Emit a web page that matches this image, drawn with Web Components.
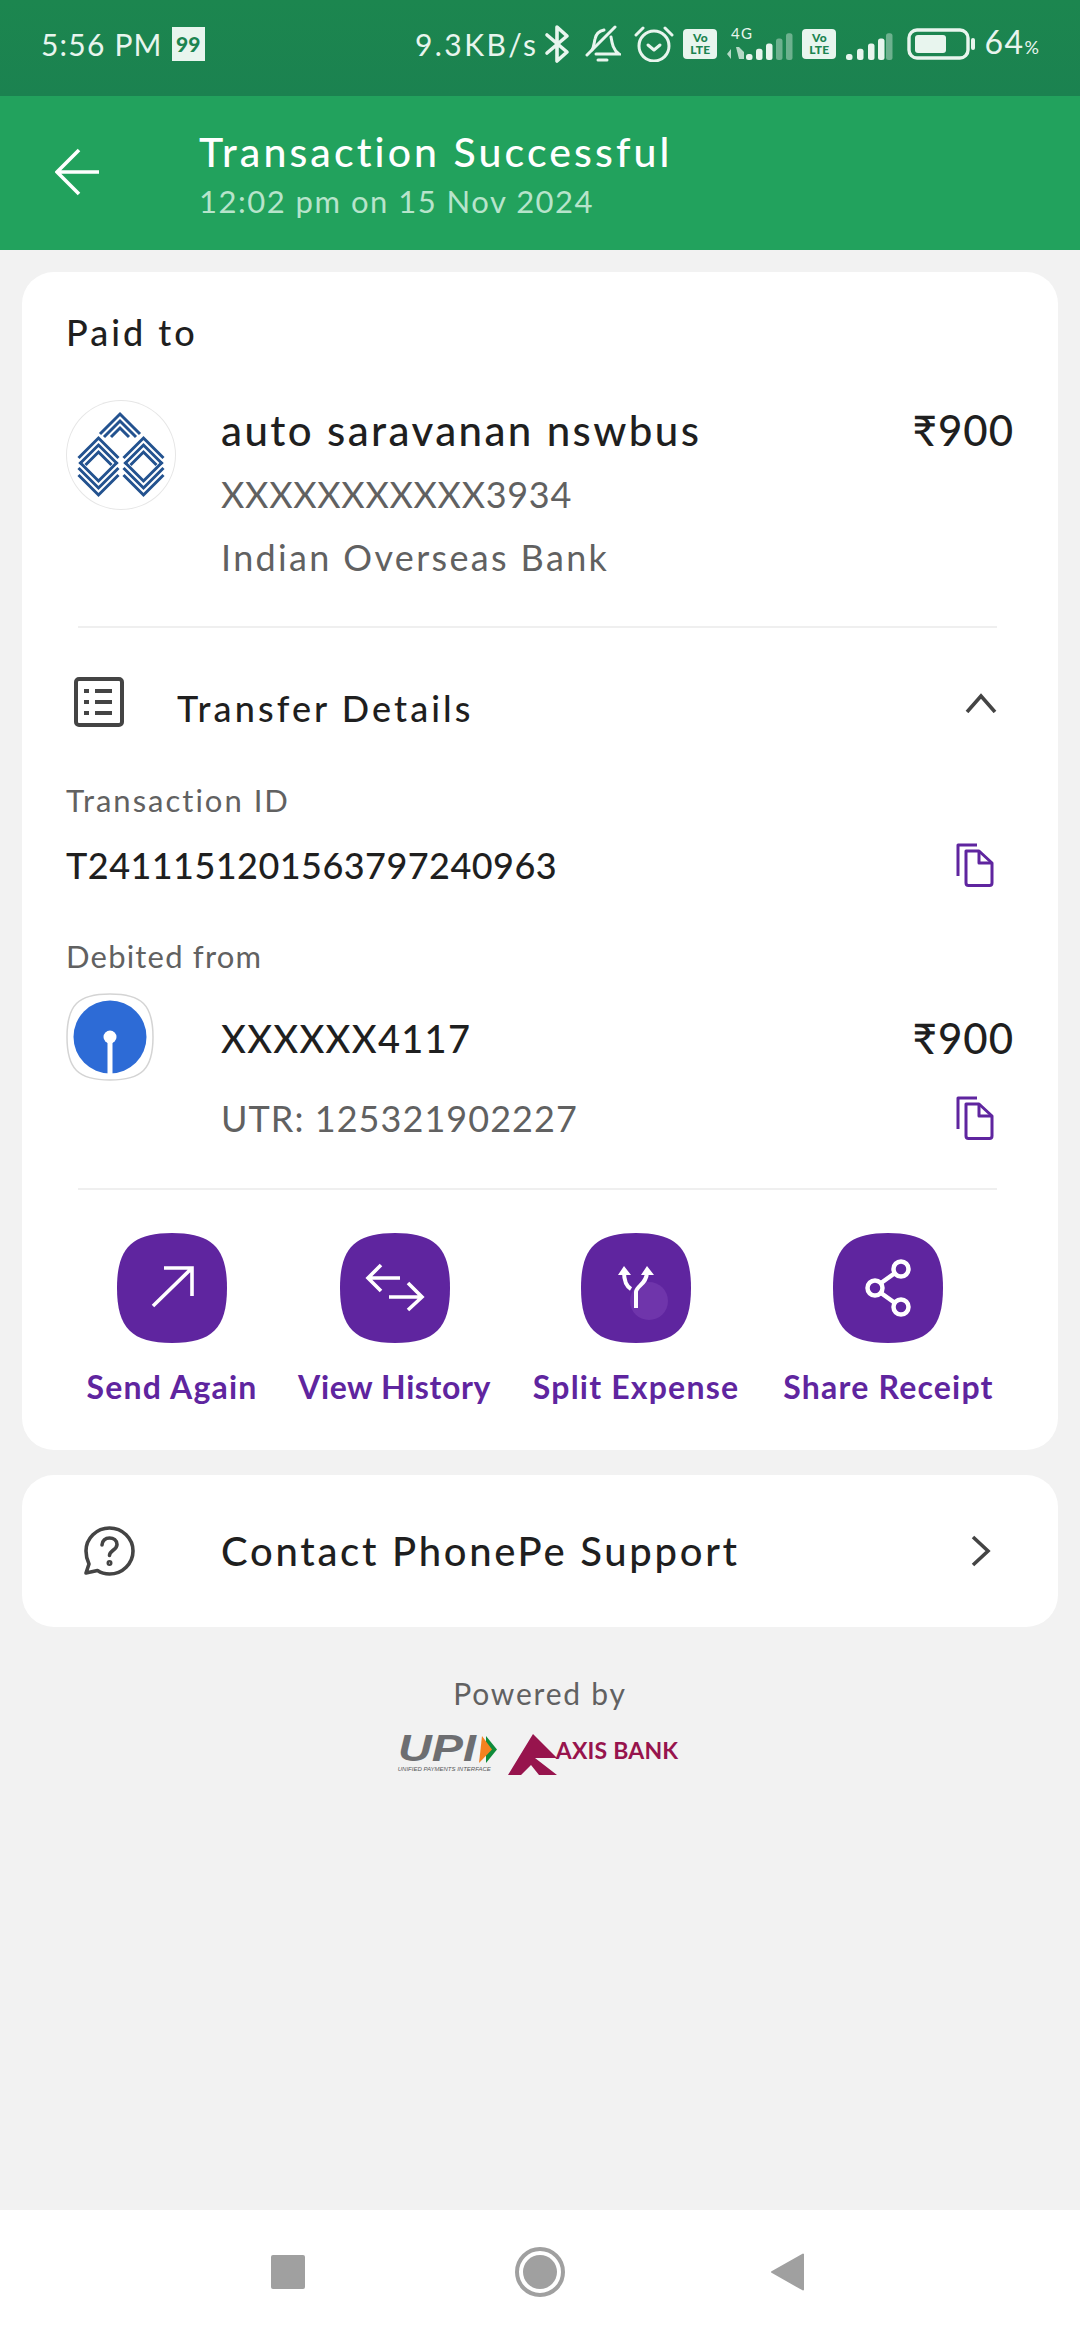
<!DOCTYPE html>
<html>
<head>
<meta charset="utf-8">
<title>Transaction Successful</title>
<style>
  html, body { margin: 0; padding: 0; background: #f2f2f2; }
  body { font-family: "Lato", "Noto Sans", sans-serif; color: #1f1f1f; }
  #app { display: flex; flex-direction: column; height: 2340px; overflow: hidden; }
  main { flex: 1; padding: 22px 22px 0; display: flex; flex-direction: column; gap: 25px; }
</style>
</head>
<body>
<div id="app">
  <status-bar></status-bar>
  <app-header heading="Transaction Successful" sub="12:02 pm on 15 Nov 2024"></app-header>
  <main>
    <payment-card></payment-card>
    <support-row label="Contact PhonePe Support"></support-row>
    <powered-by></powered-by>
  </main>
  <nav-bar></nav-bar>
</div>

<script>
class StatusBar extends HTMLElement {
  constructor() {
    super();
    this.attachShadow({ mode: 'open' });
  }

  connectedCallback() {
    const volte = `<span class="volte"><b>Vo</b><b>LTE</b></span>`;
    const bars = (xs, dim) => xs.map((x, i) => {
      const h = 6 + i * 5.2;
      const fade = i >= dim ? ' opacity=".4"' : '';
      return `<rect x="${x}" y="${34 - h}" width="6.500" height="${h}" rx="2.5" fill="#e8f5ee"${fade}/>`;
    }).join('');

    this.shadowRoot.innerHTML = `
      <style>
        :host {
          display: flex;
          align-items: center;
          height: 88px;
          padding: 0 41px 8px 41px;
          background: linear-gradient(#1c864f, #1b8250);
          color: #e8f5ee;
          font-size: 30px;
          line-height: 40px;
          letter-spacing: 1.2px;
          white-space: nowrap;
        }
        span { flex-shrink: 0; }
        .badge {
          width: 33px;
          height: 34px;
          margin-left: 9px;
          background: #e8f5ee;
          color: #1c8450;
          font-size: 21px;
          font-weight: 900;
          letter-spacing: 0;
          text-align: center;
          line-height: 34px;
        }
        .speed { margin-left: auto; margin-right: 6px; letter-spacing: 2.4px; }
        svg { display: block; flex-shrink: 0; }
        .volte {
          display: flex;
          flex-direction: column;
          align-items: center;
          justify-content: center;
          width: 34px;
          height: 30px;
          margin-left: 9px;
          background: #e8f5ee;
          border-radius: 4px;
          color: #1c8450;
          font-size: 12px;
          line-height: 12px;
          letter-spacing: .3px;
        }
        .volte b { font-weight: 900; }
        .pct { font-size: 32px; margin-left: 9px; letter-spacing: 1.5px; }
        .pct small { font-size: 18px; letter-spacing: 0; }
      </style>
      <span>5:56 PM</span>
      <span class="badge">99</span>
      <span class="speed">9.3KB/s</span>
      <svg width="26" height="40" viewBox="0 0 26 40" fill="none" stroke="#e8f5ee" stroke-width="3.6" stroke-linejoin="round" stroke-linecap="round">
        <path d="M3 11 23 28 13 37V3L23 12 3 29"/>
      </svg>
      <svg style="margin-left:14px" width="37" height="38" viewBox="0 0 37 38" fill="none" stroke="#e8f5ee" stroke-width="3" stroke-linecap="round">
        <path d="M3 30 31 2"/>
        <path d="M8 25c2-3 2-7 3-11 1-5 4-8 9-9"/>
        <path d="M27 12c1 6 2 13 8 17H12"/>
        <path d="M14 35h9"/>
      </svg>
      <svg style="margin-left:13px" width="40" height="36" viewBox="0 0 40 36" fill="none" stroke="#e8f5ee" stroke-width="3" stroke-linecap="round" stroke-linejoin="round">
        <circle cx="20" cy="20" r="15"/>
        <path d="M14 19l6 5 6-5"/>
        <path d="M2 9 9 2M38 9 31 2"/>
      </svg>
      ${volte}
      <svg style="margin-left:9px" width="67" height="36" viewBox="0 0 67 36">
        <text x="5" y="13" font-size="15" font-family="Lato, sans-serif" fill="#e8f5ee">4G</text>
        <path d="M5 23v10l-4-5zM10 21h3l5 5v7h-5z" fill="#e8f5ee" opacity=".75"/>
        ${bars([20, 30, 40, 50, 60], 3)}
      </svg>
      ${volte}
      <svg style="margin-left:9px" width="48" height="36" viewBox="0 0 48 36">${bars([1, 12, 23, 33, 41], 4)}</svg>
      <svg style="margin-left:14px" width="68" height="32" viewBox="0 0 68 32" fill="none">
        <rect x="2" y="2" width="59" height="28" rx="8" stroke="#e8f5ee" stroke-width="3.4"/>
        <rect x="8" y="7" width="31" height="18" rx="3" fill="#e8f5ee"/>
        <rect x="64" y="10" width="4" height="12" rx="2" fill="#e8f5ee"/>
      </svg>
      <span class="pct">64<small>%</small></span>
    `;
  }
}

class AppHeader extends HTMLElement {
  constructor() {
    super();
    this.attachShadow({ mode: 'open' });
  }

  connectedCallback() {
    this.shadowRoot.innerHTML = `
      <style>
        :host {
          display: flex;
          align-items: center;
          height: 154px;
          padding-left: 55px;
          background: #22a25d;
          color: #fff;
        }
        svg { flex-shrink: 0; margin: -2px 100px 0 0; }
        div { padding-top: 2px; }
        h1 {
          margin: 0;
          font-size: 41px;
          font-weight: 500;
          line-height: 50px;
          letter-spacing: 3.1px;
        }
        p {
          margin: 4px 0 0;
          color: #b7e4cb;
          font-size: 31px;
          line-height: 40px;
          letter-spacing: 1.5px;
        }
      </style>
      <svg width="44" height="48" viewBox="0 0 44 48" fill="none" stroke="#fff" stroke-width="3.6">
        <path d="M44 24H2M24 2 2 24l22 22"/>
      </svg>
      <div>
        <h1>${this.getAttribute('heading')}</h1>
        <p>${this.getAttribute('sub')}</p>
      </div>
    `;
  }
}

class CopyIcon extends HTMLElement {
  constructor() {
    super();
    this.attachShadow({ mode: 'open' });
    this.shadowRoot.innerHTML = `
      <style>:host { display: block; width: 38px; height: 44px; } svg { display: block; }</style>
      <svg width="38" height="44" viewBox="0 0 38 44" fill="none" stroke="#5f259f" stroke-width="3" stroke-linejoin="round">
        <path d="M2 33V2h19"/>
        <path d="M10 8h13l13 12v20a2.500 2.500 0 0 1-2.500 2.500h-21A2.500 2.500 0 0 1 10 40z"/>
        <path d="M23 8v12h13"/>
      </svg>
    `;
  }
}

const ACTION_ICONS = {
  send: '<path d="M36 73 75 35M47 35h28v28"/>',
  history: '<path d="M60 45H29M41 32 28 45l13 13M49 64h32M68 50l14 14-14 13"/>',
  split: `<circle cx="68" cy="68" r="19" fill="#6f35ab" stroke="none"/>
    <path stroke-width="4" d="M55 75V59c0-6 11-8 11-20M50 56c-5-3-7-8-7-17"/>
    <path fill="#fff" stroke="none" d="M66 33l7 9H60zM43 33l7 9H37z"/>`,
  share: `<g stroke-width="4.500"><circle cx="68" cy="36" r="7.500"/><circle cx="42" cy="55" r="7.500"/><circle cx="68" cy="74" r="7.500"/>
    <path d="M48 50 62 40M48 60l14 10"/></g>`
};

class ActionButton extends HTMLElement {
  constructor() {
    super();
    this.attachShadow({ mode: 'open' });
  }

  connectedCallback() {
    this.shadowRoot.innerHTML = `
      <style>
        :host {
          display: flex;
          flex-direction: column;
          align-items: center;
          color: #5f259f;
          font-size: 32px;
          font-weight: 700;
          line-height: 40px;
          letter-spacing: 1.2px;
          white-space: nowrap;
        }
        svg { display: block; margin-bottom: 24px; }
      </style>
      <svg width="110" height="110" viewBox="0 0 110 110" fill="none" stroke="#fff" stroke-width="3.6">
        <path fill="#5f259f" stroke="none" d="M55 0C95 0 110 15 110 55S95 110 55 110 0 95 0 55 15 0 55 0Z"/>
        ${ACTION_ICONS[this.getAttribute('icon')]}
      </svg>
      <slot></slot>
    `;
  }
}

class PaymentCard extends HTMLElement {
  constructor() {
    super();
    this.attachShadow({ mode: 'open' });
  }

  iob() {
    const up = (cx, y, w) => `<path d="M${cx - w} ${y + w}L${cx} ${y}L${cx + w} ${y + w}"/>`;
    const down = (cx, y, w) => `<path d="M${cx - w} ${y - w}L${cx} ${y}L${cx + w} ${y - w}"/>`;
    const cell = cx => up(cx, 38, 20) + up(cx, 45, 19) + up(cx, 52, 13) +
      down(cx, 95, 20) + down(cx, 88, 20) + down(cx, 81, 19);
    return `<svg class="iob" width="110" height="110" viewBox="0 0 110 110" fill="none" stroke="#23528f" stroke-width="3">
      ${up(54, 14, 20)}${up(54, 21, 16)}${up(54, 28, 9)}
      ${cell(32.500)}${cell(77.500)}
    </svg>`;
  }

  connectedCallback() {
    this.shadowRoot.innerHTML = `
      <style>
        :host {
          display: block;
          height: 1178px;
          box-sizing: border-box;
          padding: 38px 44px 0;
          background: #fff;
          border-radius: 32px;
        }
        .paid { font-size: 36px; line-height: 44px; letter-spacing: 3px; font-weight: 500; }
        .row { display: flex; }
        .payee { margin-top: 46px; }
        .iob { display: block; flex-shrink: 0; border-radius: 50%; box-shadow: inset 0 0 0 1px #e6e6e6; }
        .info { flex: 1; margin-left: 45px; }
        .name { font-size: 42px; line-height: 50px; margin-top: 5px; letter-spacing: 2.4px; font-weight: 500; }
        .sub { color: #616161; font-size: 36px; line-height: 44px; letter-spacing: 1.6px; }
        .amount { font-size: 42px; line-height: 50px; margin-top: 5px; letter-spacing: 1px; font-weight: 500; }
        hr { border: 0; height: 2px; background: #efefef; margin: 0 17px 0 12px; }
        .details { align-items: center; margin: 48px 17px 0 8px; height: 52px; }
        .details span { flex: 1; margin-left: 53px; font-size: 36px; font-weight: 500; line-height: 52px; letter-spacing: 3.1px; padding-top: 11px; }
        .label { color: #616161; font-size: 31px; line-height: 40px; letter-spacing: 1.2px; }
        .value { font-size: 36px; font-weight: 500; line-height: 44px; letter-spacing: .45px; }
        .copy-row { align-items: center; justify-content: space-between; padding-right: 20px; }
        .sbi { display: block; flex-shrink: 0; }
        .buttons {
          display: grid;
          grid-template-columns: 168px 189px 206px 211px;
          column-gap: 44px;
          justify-items: center;
          margin: 43px 0 0 22px;
        }
      </style>
      <div class="paid">Paid to</div>
      <div class="row payee">
        ${this.iob()}
        <div class="info">
          <div class="name">auto saravanan nswbus</div>
          <div class="sub" style="margin-top:17px;letter-spacing:.7px">XXXXXXXXXXX3934</div>
          <div class="sub" style="margin-top:19px;letter-spacing:2.35px">Indian Overseas Bank</div>
        </div>
        <div class="amount">₹900</div>
      </div>
      <hr style="margin-top:47px">
      <div class="row details">
        <svg width="50" height="50" viewBox="0 0 50 50" fill="none" stroke="#444" stroke-width="4" stroke-linejoin="round">
          <rect x="2" y="2" width="46" height="46" rx="3"/>
          <path d="M10 14h5M10 25h5M10 36h5M21 14h17M21 25h17M21 36h17"/>
        </svg>
        <span>Transfer Details</span>
        <svg style="margin-top:1px" width="32" height="20" viewBox="0 0 32 20" fill="none" stroke="#444" stroke-width="3.600">
          <path d="M2 19 16 3l14 16"/>
        </svg>
      </div>
      <div class="label" style="margin-top:52px;letter-spacing:2px">Transaction ID</div>
      <div class="row copy-row" style="margin-top:23px">
        <div class="value">T2411151201563797240963</div>
        <copy-icon></copy-icon>
      </div>
      <div class="label" style="margin-top:49px">Debited from</div>
      <div class="row" style="margin-top:17px">
        <svg class="sbi" width="88" height="88" viewBox="0 0 88 88">
          <path fill="#fff" stroke="#d4d4d4" stroke-width="1.500" d="M44 1C76 1 87 12 87 44S76 87 44 87 1 76 1 44 12 1 44 1Z"/>
          <circle cx="44" cy="44" r="36.500" fill="#2d6bd6"/>
          <circle cx="44" cy="44" r="6.500" fill="#fff"/>
          <rect x="41.500" y="44" width="5" height="37" fill="#fff"/>
        </svg>
        <div class="info" style="margin-left:67px">
          <div class="name" style="margin-top:20px;font-size:38px;letter-spacing:1.300px">XXXXXX4117</div>
        </div>
        <div class="amount" style="margin-top:20px">₹900</div>
      </div>
      <div class="row copy-row" style="margin:15px 0 0 155px">
        <div class="sub" style="letter-spacing:1.05px">UTR: 125321902227</div>
        <copy-icon></copy-icon>
      </div>
      <hr style="margin-top:48px">
      <div class="buttons">
        <action-button icon="send">Send Again</action-button>
        <action-button icon="history" style="letter-spacing:.6px">View History</action-button>
        <action-button icon="split">Split Expense</action-button>
        <action-button icon="share">Share Receipt</action-button>
      </div>
    `;
  }
}

class SupportRow extends HTMLElement {
  constructor() {
    super();
    this.attachShadow({ mode: 'open' });
  }

  connectedCallback() {
    this.shadowRoot.innerHTML = `
      <style>
        :host {
          display: flex;
          align-items: center;
          height: 152px;
          padding: 0 66px 0 62px;
          background: #fff;
          border-radius: 32px;
        }
        span { flex: 1; margin-left: 86px; font-size: 40px; font-weight: 500; letter-spacing: 2.7px; }
      </style>
      <svg width="51" height="50" viewBox="0 0 51 50" fill="none" stroke="#444" stroke-width="3.600" stroke-linecap="round" stroke-linejoin="round">
        <path d="M25.500 2C38.500 2 49 12.500 49 25S38.500 48 25.500 48c-5 0-9-1.500-12-3.500L2 47l3-9C3 34 2 30 2 25 2 12.500 12.500 2 25.500 2Z"/>
        <path d="M18 19c0-4.500 3.500-7 7.500-7s7.500 2.500 7.500 6.500c0 5.500-7.500 6-7.500 11"/>
        <circle cx="25.500" cy="37" r="1.200"/>
      </svg>
      <span>${this.getAttribute('label')}</span>
      <svg width="22" height="32" viewBox="0 0 22 32" fill="none" stroke="#444" stroke-width="3.600">
        <path d="M3 2l15 14L3 30"/>
      </svg>
    `;
  }
}

class PoweredBy extends HTMLElement {
  constructor() {
    super();
    this.attachShadow({ mode: 'open' });
    this.shadowRoot.innerHTML = `
      <style>
        :host {
          display: flex;
          flex-direction: column;
          align-items: center;
          margin-top: 21px;
          color: #616161;
          font-size: 30px;
          line-height: 40px;
          letter-spacing: 1.800px;
        }
        .logos { display: flex; align-items: flex-start; margin: 21px 4px 0 0; height: 42px; }
        .upi { position: relative; width: 99px; height: 39px; margin: 2px 11px 0 0; }
        .upi b {
          display: block;
          color: #6d6e71;
          font: italic 900 36px/26px "Liberation Sans", sans-serif;
          letter-spacing: 0;
          transform: scaleX(1.3);
          transform-origin: left;
        }
        .upi small {
          display: block;
          margin-top: 3px;
          font: italic 6px/8px "Liberation Sans", sans-serif;
          letter-spacing: 0;
          color: #58595b;
          white-space: nowrap;
        }
        .upi svg { position: absolute; right: 0; top: 0; }
        .axis {
          margin: 5px 0 0 -2px;
          color: #97144d;
          font: 700 23px/22px "Lato", sans-serif;
          letter-spacing: .2px;
          white-space: nowrap;
        }
      </style>
      <div>Powered by</div>
      <div class="logos">
        <div class="upi">
          <b>UPI</b>
          <small>UNIFIED PAYMENTS INTERFACE</small>
          <svg width="18" height="27" viewBox="0 0 18 27">
            <path d="M7 0l11 13.500L7 27z" fill="#0f8c3b"/>
            <path d="M3 0l10 13.500L0 27z" fill="#f58220"/>
          </svg>
        </div>
        <svg width="50" height="42" viewBox="0 0 50 42">
          <path fill="#97144d" d="M25 0 49 24H27L49 41H31L23 31 13 41H0Z"/>
        </svg>
        <div class="axis">AXIS BANK</div>
      </div>
    `;
  }
}

class NavBar extends HTMLElement {
  constructor() {
    super();
    this.attachShadow({ mode: 'open' });
    this.shadowRoot.innerHTML = `
      <style>
        :host {
          display: flex;
          align-items: center;
          gap: 208px;
          height: 50px;
          padding: 37px 0 43px 271px;
          background: #fff;
        }
        svg { display: block; }
        .home { margin: 0 -2px 0 2px; }
      </style>
      <svg width="34" height="34" viewBox="0 0 34 34"><rect width="34" height="34" rx="2" fill="#a0a0a0"/></svg>
      <svg class="home" width="50" height="50" viewBox="0 0 50 50">
        <circle cx="25" cy="25" r="23" fill="none" stroke="#a0a0a0" stroke-width="4"/>
        <circle cx="25" cy="25" r="17" fill="#a0a0a0"/>
      </svg>
      <svg width="33" height="38" viewBox="0 0 33 38"><path d="M32 1.500V36.500L1 19Z" fill="#a0a0a0" stroke="#a0a0a0" stroke-width="2" stroke-linejoin="round"/></svg>
    `;
  }
}

customElements.define('status-bar', StatusBar);
customElements.define('app-header', AppHeader);
customElements.define('copy-icon', CopyIcon);
customElements.define('action-button', ActionButton);
customElements.define('payment-card', PaymentCard);
customElements.define('support-row', SupportRow);
customElements.define('powered-by', PoweredBy);
customElements.define('nav-bar', NavBar);
</script>
</body>
</html>
